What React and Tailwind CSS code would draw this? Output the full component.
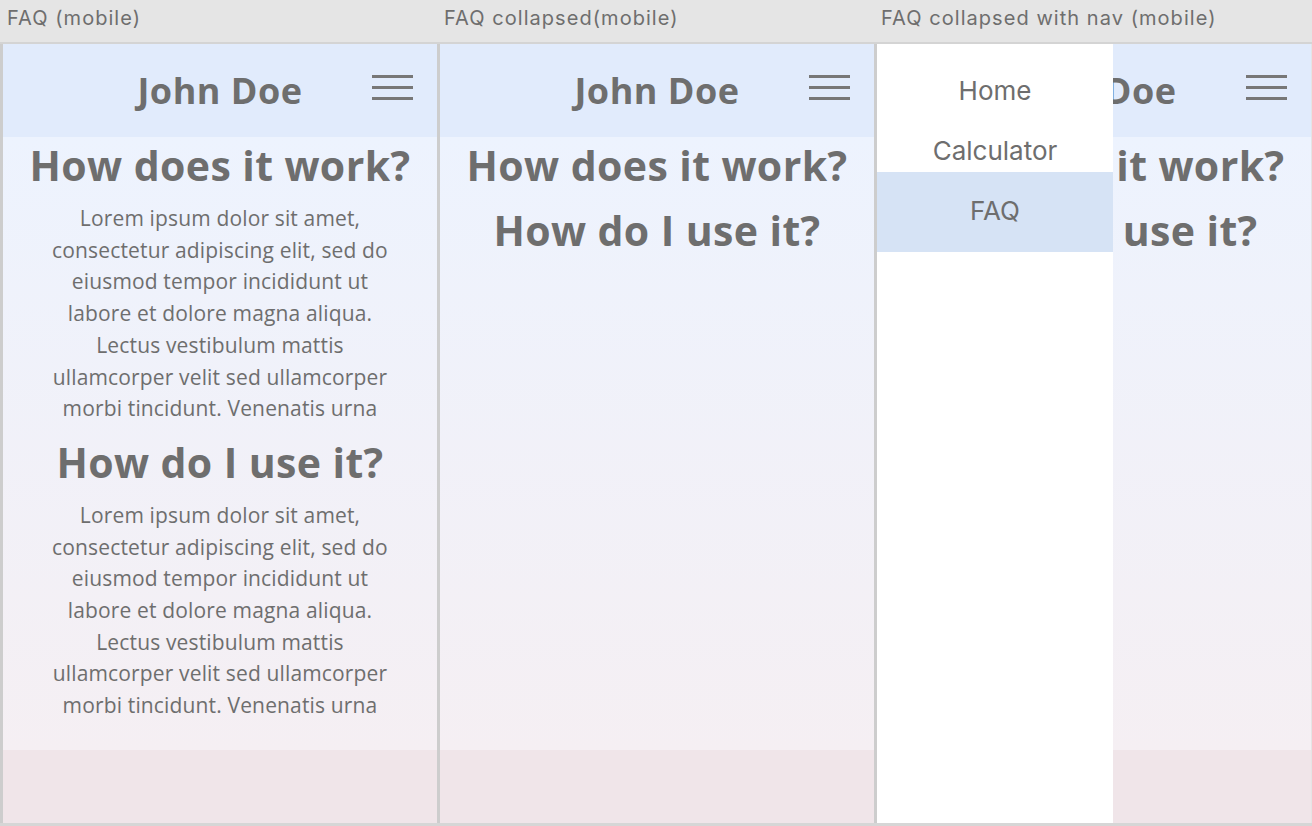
const lorem = [
  "Lorem ipsum dolor sit amet,",
  "consectetur adipiscing elit, sed do",
  "eiusmod tempor incididunt ut",
  "labore et dolore magna aliqua.",
  "Lectus vestibulum mattis",
  "ullamcorper velit sed ullamcorper",
  "morbi tincidunt. Venenatis urna",
];

const head = { fontFamily: "'Open Sans', Lato, sans-serif" };
const ui = { fontFamily: "Inter, 'Liberation Sans', sans-serif" };

function Burger() {
  return (
    <div className="absolute right-[24px] top-[31px] flex w-[41px] flex-col gap-[8px]">
      <span className="h-[3px] bg-[#777]" />
      <span className="h-[3px] bg-[#777]" />
      <span className="h-[3px] bg-[#777]" />
    </div>
  );
}

function Para() {
  return (
    <p className="mt-[10px] text-center text-[21px] leading-[31.7px] tracking-[0.15px] text-[#6e6e6e]" style={head}>
      {lorem.map((l) => (
        <span key={l} className="block">
          {l}
        </span>
      ))}
    </p>
  );
}

function Heading({ children }) {
  return (
    <h2
      className="mt-[9px] text-center text-[41px] font-bold leading-[56px] tracking-[0.4px] text-[#6e6e6e] first:mt-0"
      style={head}
    >
      {children}
    </h2>
  );
}

function Frame({ expanded, nav }) {
  return (
    <div className="relative flex h-[779px] w-[437px] flex-col overflow-hidden border-l-[3px] border-black/10">
      <header className="relative flex h-[93px] items-center justify-center bg-[#e1ebfc]">
        <h1 className="text-[36px] font-bold tracking-[0.5px] text-[#6e6e6e]" style={head}>
          John Doe
        </h1>
        <Burger />
      </header>
      <main className="flex-1 bg-gradient-to-b from-[#edf3fe] to-[#f5eff3]">
        <Heading>How does it work?</Heading>
        {expanded && <Para />}
        <Heading>How do I use it?</Heading>
        {expanded && <Para />}
      </main>
      <footer className="h-[73px] bg-[#f0e5e9]" />
      {nav && (
        <nav
          className="absolute inset-y-0 left-0 flex w-[236px] flex-col bg-white text-center text-[26px] text-[#6e6e6e]"
          style={ui}
        >
          <a className="flex h-[77px] items-end justify-center pb-[11px]">Home</a>
          <a className="flex h-[51px] items-center justify-center pt-[8px]">Calculator</a>
          <a className="flex h-[80px] items-center justify-center bg-[#d6e3f5] pb-[4px]">FAQ</a>
        </nav>
      )}
    </div>
  );
}

export default function App() {
  return (
    <div className="h-[826px] w-[1312px] overflow-hidden bg-[#e5e5e5]">
      <div
        className="flex h-[44px] items-end border-b-2 border-[#d4d4d4] pb-[9px] text-[20px] tracking-[1.05px] text-[#6e6e6e]"
        style={ui}
      >
        <span className="w-[437px] pl-[7px]">FAQ (mobile)</span>
        <span className="w-[437px] pl-[7px]">FAQ collapsed(mobile)</span>
        <span className="w-[437px] pl-[7px]">FAQ collapsed with nav (mobile)</span>
      </div>
      <div className="flex border-b-[3px] border-[#d6d6d6]">
        <Frame expanded />
        <Frame />
        <Frame nav />
      </div>
    </div>
  );
}
